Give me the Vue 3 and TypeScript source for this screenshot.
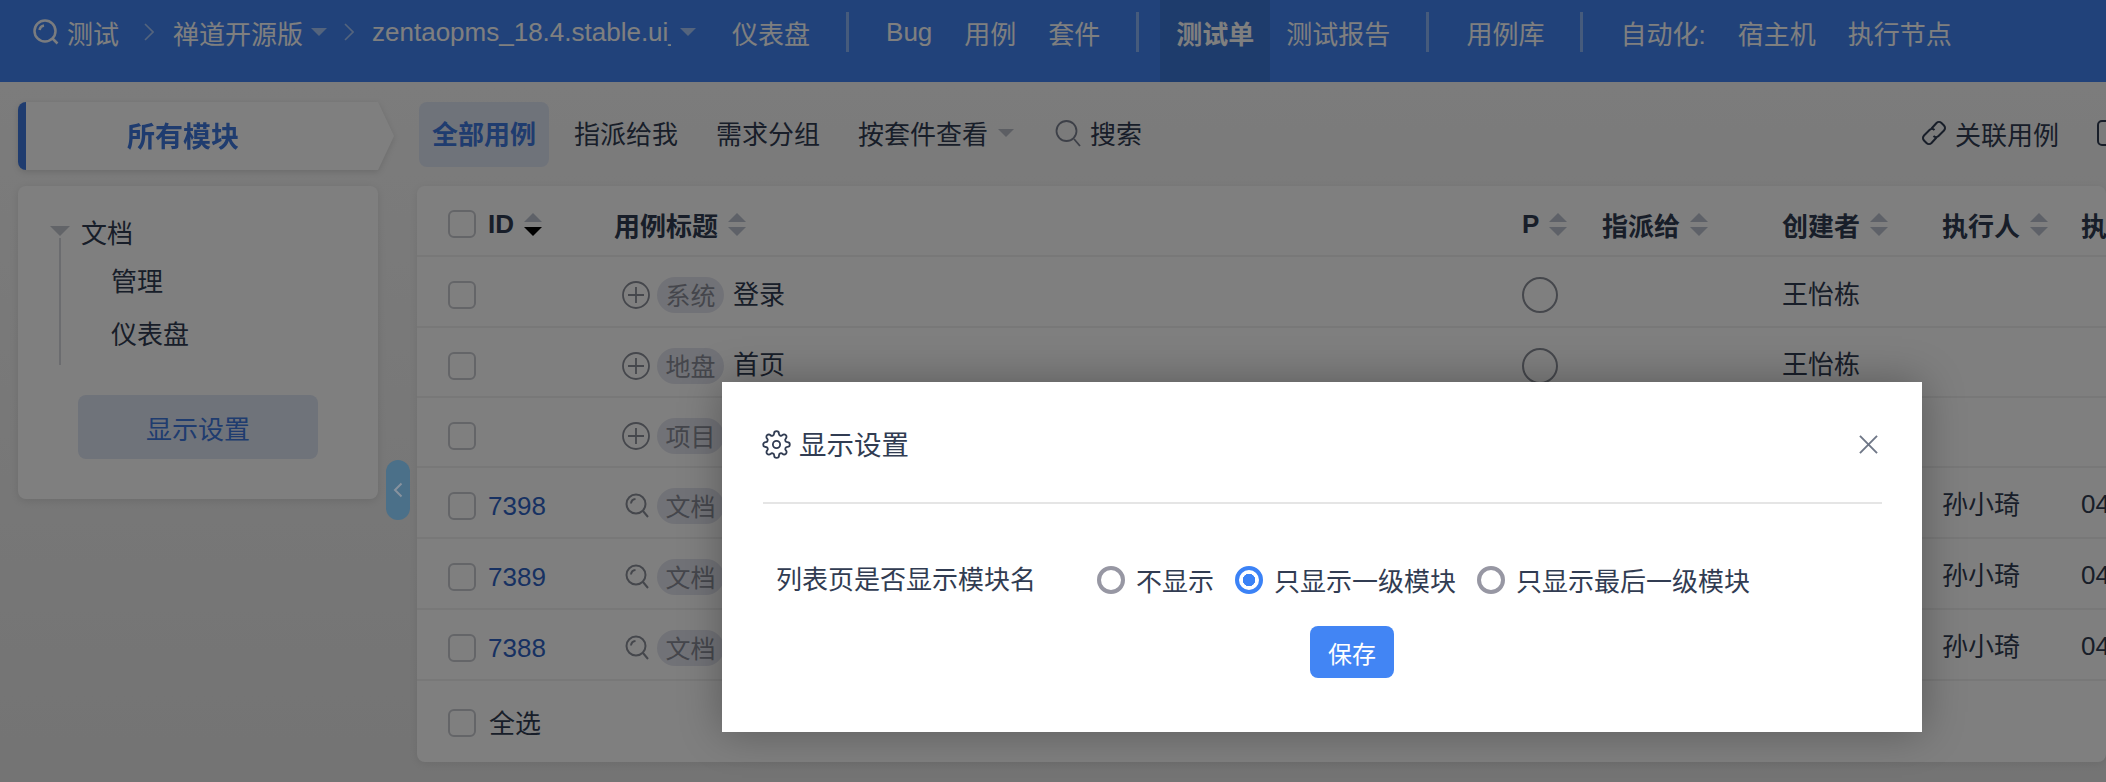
<script setup lang="ts">
interface NavItem { label: string; active?: boolean; plain?: boolean; }
const navGroups: NavItem[][] = [
  [{ label: '仪表盘' }],
  [{ label: 'Bug' }, { label: '用例' }, { label: '套件' }],
  [{ label: '测试单', active: true }, { label: '测试报告' }],
  [{ label: '用例库' }],
  [{ label: '自动化:', plain: true }, { label: '宿主机' }, { label: '执行节点' }],
];
const tree = ['管理', '仪表盘'];
const columns = [
  { label: 'ID', sort: true, down: true },
  { label: '用例标题', sort: true },
  { label: 'P', sort: true },
  { label: '指派给', sort: true },
  { label: '创建者', sort: true },
  { label: '执行人', sort: true },
  { label: '执', sort: false },
];
interface Row { id: string; tag: string; title: string; pri: boolean; creator: string; runner: string; date: string; slim: boolean; }
const rows: Row[] = [
  { id: '', tag: '系统', title: '登录', pri: true, creator: '王怡栋', runner: '', date: '', slim: false },
  { id: '', tag: '地盘', title: '首页', pri: true, creator: '王怡栋', runner: '', date: '', slim: true },
  { id: '', tag: '项目', title: '', pri: false, creator: '', runner: '', date: '', slim: true },
  { id: '7398', tag: '文档', title: '', pri: false, creator: '', runner: '孙小琦', date: '04', slim: false },
  { id: '7389', tag: '文档', title: '', pri: false, creator: '', runner: '孙小琦', date: '04', slim: false },
  { id: '7388', tag: '文档', title: '', pri: false, creator: '', runner: '孙小琦', date: '04', slim: false },
];
const radios = [
  { label: '不显示', on: false },
  { label: '只显示一级模块', on: true },
  { label: '只显示最后一级模块', on: false },
];
</script>

<template>
  <div class="app">
    <header class="topbar">
      <div class="crumbs">
        <svg class="q-top" viewBox="0 0 26 26" fill="none">
          <circle cx="12" cy="12" r="10.5" />
          <path d="M6.5 11a5.5 5.5 0 0 1 4.5-4.5M19.5 19.5l5 5" />
        </svg>
        <span class="crumb-home">测试</span>
        <svg class="chev" viewBox="0 0 10 18" fill="none"><path d="M1 1l8 8-8 8" /></svg>
        <span class="crumb-text">禅道开源版</span>
        <i class="caret"></i>
        <svg class="chev chev-b" viewBox="0 0 10 18" fill="none"><path d="M1 1l8 8-8 8" /></svg>
        <span class="crumb-build">zentaopms_18.4.stable.ui_test</span>
        <i class="caret caret-b"></i>
      </div>
      <nav class="nav">
        <template v-for="(group, g) in navGroups" :key="g">
          <span v-if="g > 0" class="divider"></span>
          <a
            v-for="item in group"
            :key="item.label"
            class="nav-item"
            :class="{ active: item.active }"
          >{{ item.label }}</a>
        </template>
      </nav>
    </header>

    <main class="page">
      <aside class="side">
        <div class="module-wrap">
          <div class="module-tab">所有模块</div>
        </div>
        <div class="side-card">
          <div class="tree-root"><i class="caret caret-tree"></i><span>文档</span></div>
          <ul class="tree-list">
            <li v-for="t in tree" :key="t">{{ t }}</li>
          </ul>
          <button class="display-btn">显示设置</button>
        </div>
      </aside>

      <section class="content">
        <div class="subnav">
          <a class="tab tab-on">全部用例</a>
          <a class="tab">指派给我</a>
          <a class="tab">需求分组</a>
          <a class="tab">按套件查看<i class="caret caret-dark"></i></a>
          <a class="tab tab-search">
            <svg class="search" viewBox="0 0 26 28" fill="none">
              <circle cx="11.5" cy="12" r="10" />
              <path d="M19 20l6 7" />
            </svg>
            搜索
          </a>
          <div class="actions">
            <svg class="link" viewBox="0 0 28 28" fill="none">
              <path d="M11.5 9.5l5-5.5a3.6 3.6 0 0 1 5 0l2.5 2.5a3.6 3.6 0 0 1 0 5l-5.5 5.5a3.6 3.6 0 0 1-5 0" />
              <path d="M16.5 18.5l-5 5.5a3.6 3.6 0 0 1-5 0L4 21.5a3.6 3.6 0 0 1 0-5l5.5-5.5a3.6 3.6 0 0 1 5 0" />
            </svg>
            <span>关联用例</span>
            <i class="box-icon"></i>
          </div>
        </div>

        <div class="table">
          <div class="row head">
            <div class="cell-check"><i class="check"></i></div>
            <div v-for="c in columns" :key="c.label" class="head-cell">
              <span>{{ c.label }}</span>
              <span v-if="c.sort" class="sort">
                <i class="up"></i>
                <i class="down" :class="{ on: c.down }"></i>
              </span>
            </div>
          </div>
          <div v-for="(r, i) in rows" :key="i" class="row" :class="{ slim: r.slim }">
            <div class="cell-check"><i class="check"></i></div>
            <div class="cell-id">{{ r.id }}</div>
            <div class="cell-title">
              <svg v-if="!r.id" class="plus" viewBox="0 0 28 28" fill="none">
                <circle cx="14" cy="14" r="13" />
                <path d="M14 6v16M6 14h16" />
              </svg>
              <svg v-else class="q" viewBox="0 0 24 26" fill="none">
                <circle cx="11" cy="11" r="9.5" />
                <path d="M6 10.5A5 5 0 0 1 10.5 6M18 18l5 6" />
              </svg>
              <span class="tag">{{ r.tag }}</span>
              <span class="title">{{ r.title }}</span>
            </div>
            <div><i v-if="r.pri" class="pri"></i></div>
            <div></div>
            <div class="cell-text creator">{{ r.creator }}</div>
            <div class="cell-text runner">{{ r.runner }}</div>
            <div class="cell-text">{{ r.date }}</div>
          </div>
          <div class="foot">
            <i class="check"></i>
            <span>全选</span>
          </div>
        </div>
      </section>
    </main>

    <button class="handle" aria-label="collapse">
      <svg viewBox="0 0 10 16" fill="none"><path d="M8.5 1.5L2 8l6.5 6.5" /></svg>
    </button>

    <div class="overlay"></div>

    <div class="modal">
      <div class="modal-head">
        <svg class="gear" viewBox="0 0 24 24" fill="none">
          <circle cx="12" cy="12" r="3" />
          <path d="M19.4 15a1.65 1.65 0 0 0 .33 1.82l.06.06a2 2 0 0 1 0 2.83 2 2 0 0 1-2.83 0l-.06-.06a1.65 1.65 0 0 0-1.82-.33 1.65 1.65 0 0 0-1 1.51V21a2 2 0 0 1-2 2 2 2 0 0 1-2-2v-.09A1.65 1.65 0 0 0 9 19.4a1.65 1.65 0 0 0-1.82.33l-.06.06a2 2 0 0 1-2.83 0 2 2 0 0 1 0-2.83l.06-.06a1.65 1.65 0 0 0 .33-1.82 1.65 1.65 0 0 0-1.51-1H3a2 2 0 0 1-2-2 2 2 0 0 1 2-2h.09A1.65 1.65 0 0 0 4.6 9a1.65 1.65 0 0 0-.33-1.82l-.06-.06a2 2 0 0 1 0-2.83 2 2 0 0 1 2.83 0l.06.06a1.65 1.65 0 0 0 1.82.33H9a1.65 1.65 0 0 0 1-1.51V3a2 2 0 0 1 2-2 2 2 0 0 1 2 2v.09a1.65 1.65 0 0 0 1 1.51 1.65 1.65 0 0 0 1.82-.33l.06-.06a2 2 0 0 1 2.83 0 2 2 0 0 1 0 2.83l-.06.06a1.65 1.65 0 0 0-.33 1.82V9a1.65 1.65 0 0 0 1.51 1H21a2 2 0 0 1 2 2 2 2 0 0 1-2 2h-.09a1.65 1.65 0 0 0-1.51 1z" />
        </svg>
        <span class="modal-title">显示设置</span>
        <svg class="close" viewBox="0 0 20 20" fill="none"><path d="M1 1l18 18M19 1L1 19" /></svg>
      </div>
      <div class="form-row">
        <span class="form-label">列表页是否显示模块名</span>
        <div class="radios">
          <label v-for="r in radios" :key="r.label" class="radio">
            <i class="dot" :class="{ on: r.on }"></i>
            <span>{{ r.label }}</span>
          </label>
        </div>
      </div>
      <div class="form-actions">
        <button class="save">保存</button>
      </div>
    </div>
  </div>
</template>

<style>
html, body { margin: 0; overflow: hidden; }
</style>

<style scoped>
.app {
  position: relative;
  width: 2106px;
  height: 782px;
  overflow: hidden;
  font-family: "Liberation Sans", "Noto Sans CJK SC", sans-serif;
  font-size: 26px;
  color: #313c52;
  background: linear-gradient(180deg, #fafafa 0%, #e8e8e8 100%);
}
i { display: block; font-style: normal; }

/* top bar */
.topbar {
  height: 82px;
  background: #4285f4;
  display: flex;
  color: #fff;
}
.crumbs {
  display: flex;
  align-items: center;
  height: 64px;
  padding-left: 33px;
}
.q-top { width: 26px; height: 26px; stroke: rgba(255,255,255,.95); stroke-width: 2.5; }
.crumb-home { margin-left: 8px; }
.chev { width: 10px; height: 18px; margin-left: 25px; stroke: rgba(255,255,255,.55); stroke-width: 1.6; }
.chev-b { margin-left: 17px; }
.crumb-text { margin-left: 19px; }
.crumb-build { margin-left: 18px; width: 299px; overflow: hidden; white-space: nowrap; }
.caret {
  width: 0;
  height: 0;
  margin-left: 8px;
  border-left: 8px solid transparent;
  border-right: 8px solid transparent;
  border-top: 8px solid rgba(255,255,255,.55);
}
.caret-b { margin-left: 9px; }
.nav { display: flex; align-items: stretch; margin-left: 20px; }
.nav-item {
  display: flex;
  align-items: center;
  padding: 0 16px 18px;
  white-space: nowrap;
}
.nav-item.active { background: #3c78d8; font-weight: 700; }
.divider {
  width: 3px;
  height: 40px;
  margin: 12px 21px 0 20px;
  background: rgba(255,255,255,.4);
}

/* page */
.page {
  display: grid;
  grid-template-columns: 360px 1688px;
  column-gap: 40px;
  padding: 20px 0 0 18px;
}
.module-wrap { filter: drop-shadow(0 2px 3px rgba(0,0,0,.12)); width: 376px; }
.module-tab {
  height: 68px;
  display: flex;
  align-items: center;
  justify-content: center;
  padding: 0 54px 3px 0;
  background: #fff;
  color: #3f78de;
  font-size: 28px;
  font-weight: 700;
  clip-path: polygon(0 0, 360px 0, 100% 50%, 360px 100%, 0 100%);
  border-left: 8px solid #3f78de;
  border-radius: 8px 0 0 8px;
  box-sizing: border-box;
}
.side-card {
  margin-top: 16px;
  padding: 27px 0 40px;
  background: #fff;
  border-radius: 8px;
  box-shadow: 0 2px 8px rgba(0,0,0,.1);
}
.tree-root { display: flex; align-items: center; height: 40px; padding-left: 32px; }
.tree-root span { margin-left: 11px; transform: translateY(-2px); }
.caret-tree {
  margin-left: 0;
  border-left-width: 10px;
  border-right-width: 10px;
  border-top: 10px solid #c4c8d0;
  margin-top: -4px;
}
.tree-list {
  list-style: none;
  margin: -15px 0 0 41px;
  padding: 18px 0 3px 50px;
  border-left: 2px solid #d6d8de;
}
.tree-list li { height: 53px; line-height: 53px; }
.display-btn {
  display: block;
  width: 240px;
  height: 64px;
  margin: 30px 0 0 60px;
  border: 0;
  border-radius: 8px;
  background: #dfe6f5;
  color: #3f78de;
  font: inherit;
}

/* content */
.subnav { display: flex; align-items: stretch; height: 65px; margin-left: 1px; }
.tab {
  display: flex;
  align-items: center;
  padding: 0 13px 4px;
  margin-right: 12px;
  border-radius: 8px;
  white-space: nowrap;
}
.tab-on { background: #dfe6f5; color: #3f78de; font-weight: 700; }
.caret-dark { margin-left: 10px; border-top-color: #b8bcc6; }
.tab-search { margin-left: 3px; }
.search { width: 26px; height: 28px; margin-right: 9px; stroke: #7b8190; stroke-width: 1.8; }
.actions {
  display: flex;
  align-items: center;
  margin-left: auto;
  width: 186px;
  flex: none;
  padding-bottom: 3px;
  box-sizing: border-box;
}
.link { width: 28px; height: 28px; flex: none; margin-right: 7px; stroke: #313c52; stroke-width: 2; }
.actions span { flex: none; }
.box-icon {
  flex: none;
  width: 22px;
  height: 22px;
  margin-left: 38px;
  border: 2.5px solid #313c52;
  border-radius: 5px;
}

.table {
  margin-top: 19px;
  margin-left: -1px;
  height: 576px;
  background: #fff;
  border-radius: 8px;
  box-shadow: 0 2px 8px rgba(0,0,0,.08);
  overflow: hidden;
}
.row {
  display: grid;
  grid-template-columns: 71px 126px 908px 80px 180px 160px 139px 24px;
  align-items: center;
  box-sizing: border-box;
  height: 71px;
  padding-top: 7px;
  border-bottom: 2px solid #f0f0f0;
}
.row.slim { height: 70px; }
.cell-check { padding-left: 31px; }
.check {
  box-sizing: border-box;
  width: 28px;
  height: 28px;
  border: 2px solid #c8cad0;
  border-radius: 6px;
  background: #fff;
}
.head-cell {
  display: flex;
  align-items: center;
  gap: 10px;
  font-weight: 700;
  white-space: nowrap;
}
.sort { display: flex; flex-direction: column; gap: 5px; }
.up, .down {
  width: 0;
  height: 0;
  border-left: 9px solid transparent;
  border-right: 9px solid transparent;
}
.up { border-bottom: 9px solid #bcc3d0; }
.down { border-top: 9px solid #bcc3d0; }
.down.on { border-top-color: #000; }
.cell-id { color: #2f63c4; }
.cell-title { display: flex; align-items: center; padding-left: 8px; white-space: nowrap; }
.plus { width: 28px; height: 28px; flex: none; stroke: #8b8f99; stroke-width: 1.8; }
.q { width: 24px; height: 26px; flex: none; margin: 0 1px 0 3px; stroke: #8b8f99; stroke-width: 2; }
.tag {
  margin-left: 7px;
  width: 67px;
  height: 36px;
  line-height: 38px;
  text-align: center;
  border-radius: 18px;
  background: #e3e5ee;
  color: #8a8d98;
  font-size: 25px;
}
.title { margin-left: 9px; transform: translateY(-3px); }
.pri {
  box-sizing: border-box;
  width: 36px;
  height: 36px;
  border: 2px solid #8b8f99;
  border-radius: 50%;
}
.cell-text { white-space: nowrap; transform: translateY(-2px); }
.creator { transform: translateY(-3px); }
.runner { transform: translateY(-4px); }
.foot {
  display: flex;
  align-items: center;
  gap: 13px;
  height: 79px;
  padding: 5px 0 0 31px;
  box-sizing: border-box;
}
.foot span { transform: translateY(-2px); }

/* collapse handle */
.handle {
  position: absolute;
  left: 386px;
  top: 460px;
  z-index: 11;
  width: 24px;
  height: 60px;
  padding: 0;
  border: 0;
  border-radius: 12px;
  background: #4b7089;
  display: flex;
  align-items: center;
  justify-content: center;
}
.handle svg { width: 10px; height: 16px; stroke: #87929e; stroke-width: 2; }

/* modal */
.overlay {
  position: absolute;
  inset: 0;
  z-index: 10;
  background: rgba(0,0,0,.5);
}
.modal {
  position: absolute;
  left: 722px;
  top: 382px;
  z-index: 12;
  box-sizing: border-box;
  width: 1200px;
  height: 350px;
  padding: 0 40px 0 41px;
  background: #fff;
  box-shadow: 0 0 40px rgba(0,0,0,.3);
}
.modal-head {
  display: flex;
  align-items: center;
  box-sizing: border-box;
  height: 122px;
  padding: 4px 4px 0 0;
  border-bottom: 2px solid #e5e5e5;
}
.gear { width: 29px; height: 29px; margin-left: -1px; stroke: #313c52; stroke-width: 1.5; }
.modal-title { margin-left: 8px; font-size: 27.5px; transform: translateY(-1px); }
.close { width: 19px; height: 19px; margin-left: auto; stroke: #6f7787; stroke-width: 2; }
.form-row {
  display: flex;
  align-items: center;
  margin-top: 57px;
  padding-left: 13px;
}
.form-label { width: 321px; flex: none; transform: translateY(-2px); }
.radios { display: flex; gap: 21px; }
.radio { display: flex; align-items: center; gap: 11px; white-space: nowrap; }
.dot {
  box-sizing: border-box;
  width: 28px;
  height: 28px;
  border: 4px solid #9797a3;
  border-radius: 50%;
  background: #fff;
}
.dot.on {
  border-color: #3b82f6;
  background: radial-gradient(circle, #3b82f6 0 6px, #fff 6.5px);
}
.form-actions { display: flex; justify-content: center; margin-top: 28px; padding-left: 59px; }
.save {
  width: 84px;
  height: 52px;
  padding: 0;
  border: 0;
  border-radius: 8px;
  background: #4285f4;
  color: #fff;
  font: inherit;
  font-size: 24px;
}
</style>
